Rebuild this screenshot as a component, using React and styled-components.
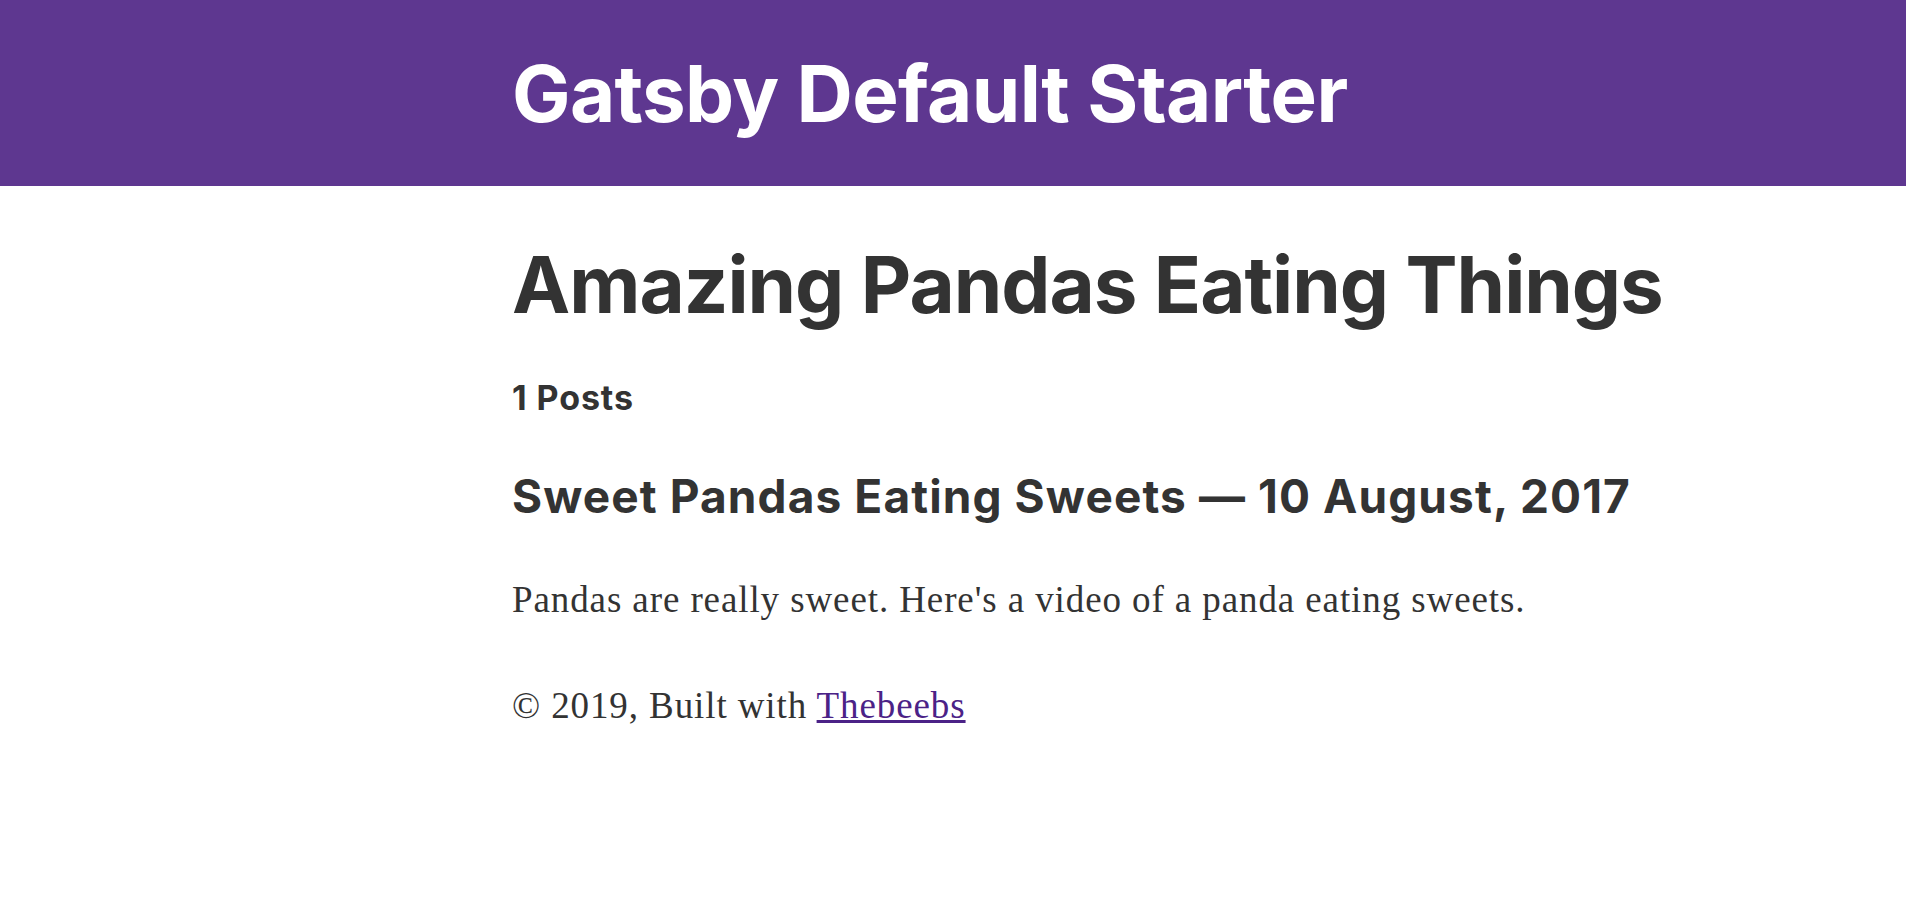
import React from "react";
import styled, { createGlobalStyle } from "styled-components";

const Global = createGlobalStyle`
  html, body { margin: 0; padding: 0; background: #ffffff; }
  body { font-family: "Liberation Serif", serif; color: #333333; }
`;

const Header = styled.header`
  background: #5e3790;
  padding: 51px 0 49px calc(50% - 441px);
`;

const SiteTitle = styled.h1`
  margin: 0;
  font-family: Inter, "Noto Sans", sans-serif;
  font-weight: 700;
  font-size: 78px;
  line-height: 1.1;
  color: #ffffff;
  letter-spacing: -0.6px;
`;

const Main = styled.main`
  padding: 55px 0 0 calc(50% - 441px);
  display: flex;
  flex-direction: column;
  align-items: flex-start;
`;

const Heading = styled.h1`
  margin: 0 0 ${(p) => p.$gap}px;
  font-family: Inter, "Noto Sans", sans-serif;
  font-weight: 700;
  font-size: ${(p) => p.$size}px;
  line-height: ${(p) => p.$lh}px;
  color: #333333;
  letter-spacing: ${(p) => p.$track || 0}px;
  white-space: nowrap;
`;

const Body = styled.p`
  margin: 0 0 ${(p) => p.$gap || 0}px;
  font-family: "Liberation Serif", serif;
  font-size: 37px;
  line-height: 54px;
  letter-spacing: 0.9px;
  color: #333333;
`;

const Link = styled.a`
  color: #4b2287;
  text-decoration: underline;
`;

export default function App() {
  return (
    <>
      <Global />
      <Header>
        <SiteTitle>Gatsby Default Starter</SiteTitle>
      </Header>
      <Main>
        <Heading as="h1" $size={78} $lh={88} $gap={51} $track={-1}>
          Amazing Pandas Eating Things
        </Heading>
        <Heading as="h4" $size={34} $lh={36} $gap={56} $track={0.9}>
          1 Posts
        </Heading>
        <Heading as="h3" $size={46} $lh={48} $gap={53} $track={1.1}>
          Sweet Pandas Eating Sweets — 10 August, 2017
        </Heading>
        <Body $gap={52}>
          Pandas are really sweet. Here's a video of a panda eating sweets.
        </Body>
        <Body as="footer">
          © 2019, Built with <Link href="#">Thebeebs</Link>
        </Body>
      </Main>
    </>
  );
}
